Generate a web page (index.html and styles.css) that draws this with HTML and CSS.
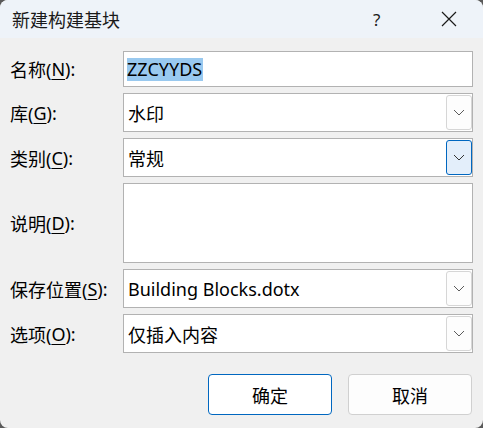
FILE: index.html
```html
<!DOCTYPE html>
<html lang="zh-CN">
<head>
  <meta charset="UTF-8" />
  <title>新建构建基块</title>
  <link rel="stylesheet" href="styles.css">
</head>
<body>
  <div class="dialog">
    <div class="titlebar">
      <span class="title">新建构建基块</span>
      <span class="help">?</span>
      <span class="close">
        <svg width="16" height="16" viewBox="0 0 16 16"><path d="M1 1 L15 15 M15 1 L1 15" stroke="#1a1a1a" stroke-width="1.2" fill="none"/></svg>
      </span>
    </div>

    <div class="form">
      <label class="label">名称(<u>N</u>):</label>
      <div class="field text-field"><span class="selected">ZZCYYDS</span></div>

      <label class="label">库(<u>G</u>):</label>
      <div class="field select">
        <span class="value">水印</span>
        <span class="drop"><svg width="12" height="7" viewBox="0 0 12 7"><path d="M1 1 L6 6 L11 1" stroke="#5c5c5c" stroke-width="1" fill="none"/></svg></span>
      </div>

      <label class="label">类别(<u>C</u>):</label>
      <div class="field select">
        <span class="value">常规</span>
        <span class="drop focus"><svg width="12" height="7" viewBox="0 0 12 7"><path d="M1 1 L6 6 L11 1" stroke="#333" stroke-width="1" fill="none"/></svg></span>
      </div>

      <label class="label">说明(<u>D</u>):</label>
      <div class="field area"></div>

      <label class="label">保存位置(<u>S</u>):</label>
      <div class="field select">
        <span class="value">Building Blocks.dotx</span>
        <span class="drop"><svg width="12" height="7" viewBox="0 0 12 7"><path d="M1 1 L6 6 L11 1" stroke="#5c5c5c" stroke-width="1" fill="none"/></svg></span>
      </div>

      <label class="label">选项(<u>O</u>):</label>
      <div class="field select">
        <span class="value">仅插入内容</span>
        <span class="drop"><svg width="12" height="7" viewBox="0 0 12 7"><path d="M1 1 L6 6 L11 1" stroke="#5c5c5c" stroke-width="1" fill="none"/></svg></span>
      </div>
    </div>

    <div class="buttons">
      <button class="btn primary">确定</button>
      <button class="btn">取消</button>
    </div>
  </div>
</body>
</html>
```

FILE: styles.css
```css
html {
  background: #5a5a5a;
}
body {
  margin: 0;
  font-family: "Noto Sans", "Noto Sans CJK SC", sans-serif;
  color: #000;
}
.dialog {
  width: 483px;
  height: 428px;
  background: #f0f0f0;
  border-radius: 8px;
  overflow: hidden;
}

/* タイトルバー */
.titlebar {
  height: 38px;
  background: #eef3f9;
  display: flex;
  align-items: center;
  padding-left: 12px;
  box-sizing: border-box;
}
.title {
  flex: 1;
  font-size: 18px;
  color: #1a1a1a;
}
.help {
  font-size: 17px;
  color: #1a1a1a;
  width: 12px;
  margin-right: 56px;
}
.close {
  display: flex;
  margin-right: 26px;
}

/* フォーム */
.form {
  display: grid;
  grid-template-columns: 113px 350px;
  row-gap: 6px;
  padding: 13px 0 0 10px;
}
.label {
  font-size: 18px;
  display: flex;
  align-items: center;
  white-space: nowrap;
}
.label u {
  text-underline-offset: 3px;
}
.field {
  background: #fff;
  border: 1px solid #b2b2b2;
  box-sizing: border-box;
  font-size: 18px;
}
.text-field {
  height: 36px;
  display: flex;
  align-items: center;
  padding-left: 3px;
}
.selected {
  background: #99c9ef;
  line-height: 23px;
  padding-right: 1px;
}
.select {
  height: 39px;
  display: flex;
  align-items: center;
  padding: 1px 0 1px 4px;
}
.select .value {
  flex: 1;
}
.drop {
  width: 26px;
  height: 35px;
  box-sizing: border-box;
  border: 1px solid #d6d6d6;
  border-radius: 3px;
  background: #fdfdfd;
  display: flex;
  align-items: center;
  justify-content: center;
}
.drop.focus {
  border-color: #0067c0;
  background: #e3eefa;
}
.area {
  height: 80px;
}

/* ボタン */
.buttons {
  display: flex;
  justify-content: flex-end;
  gap: 16px;
  padding: 21px 11px 0 0;
}
.btn {
  width: 124px;
  height: 41px;
  font-family: "Noto Sans", "Noto Sans CJK SC", sans-serif;
  font-size: 18px;
  background: #fdfdfd;
  border: 1px solid #d0d0d0;
  border-radius: 4px;
  color: #000;
  padding: 0;
}
.btn.primary {
  background: #fff;
  border-color: #0067c0;
}
```
